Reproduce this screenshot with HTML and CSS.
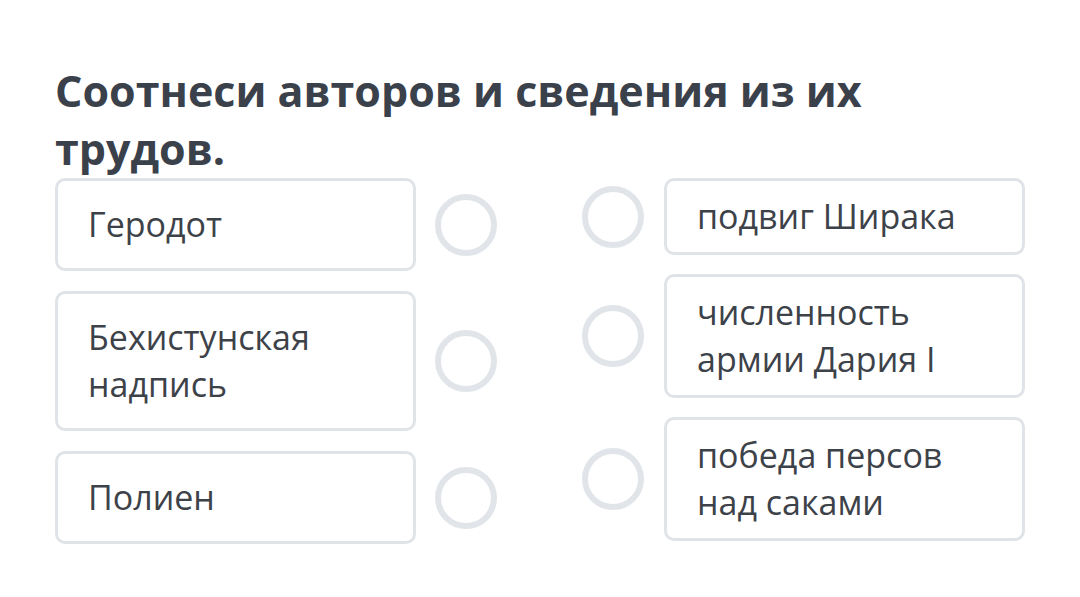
FILE: index.html
```html
<!DOCTYPE html>
<html lang="ru">
<head>
<meta charset="utf-8">
<link rel="stylesheet" href="styles.css">
</head>
<body>
<div class="page">
  <h1 class="title">Соотнеси авторов и сведения из их трудов.</h1>
  <div class="board">
    <div class="col left">
      <div class="row"><div class="card">Геродот</div><span class="dot"></span></div>
      <div class="row"><div class="card">Бехистунская надпись</div><span class="dot"></span></div>
      <div class="row"><div class="card">Полиен</div><span class="dot"></span></div>
    </div>
    <div class="col right">
      <div class="row"><span class="dot"></span><div class="card">подвиг Ширака</div></div>
      <div class="row"><span class="dot"></span><div class="card">численность армии Дария I</div></div>
      <div class="row"><span class="dot"></span><div class="card">победа персов над саками</div></div>
    </div>
  </div>
</div>
</body>
</html>
```
FILE: styles.css
```css
html, body { margin: 0; padding: 0; background: #ffffff; }
body { font-family: "Open Sans", "Liberation Sans", sans-serif; color: #3d4249; }
.page { padding: 62px 55px 0 55px; width: 970px; }
.title {
  margin: 0;
  font-size: 43px;
  line-height: 58px;
  font-weight: 700;
  color: #3a414b;
  width: 860px;
}
.board { display: flex; justify-content: space-between; margin-top: 0; }
.col { display: flex; flex-direction: column; gap: 20px; }
.right { gap: 19px; }
.row { display: flex; align-items: center; gap: 19px; }
.right .row { gap: 20px; }
.card {
  width: 361px;
  box-sizing: border-box;
  border: 3px solid #e0e4e8;
  border-radius: 10px;
  font-size: 34px;
  line-height: 47px;
  padding: 20px 30px;
}
.right .card { padding: 12px 30px; }
.dot {
  width: 62px; height: 62px;
  box-sizing: border-box;
  border: 6px solid #e1e5e9;
  border-radius: 50%;
  flex: none;
}
```
